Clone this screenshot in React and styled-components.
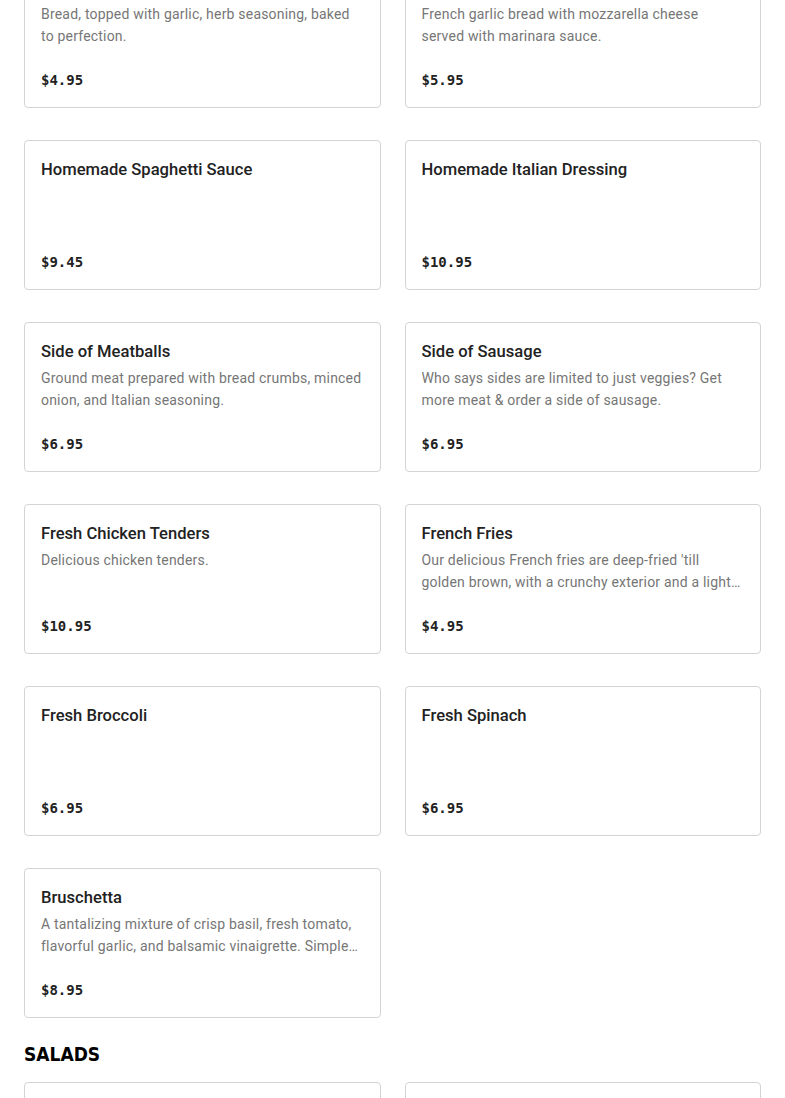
import styled, { createGlobalStyle } from "styled-components";

const GlobalStyle = createGlobalStyle`
  body {
    margin: 0;
    background: #ffffff;
    font-family: Roboto, "Liberation Sans", sans-serif;
    color: #191919;
  }
`;

const Page = styled.main`
  margin-top: -42px;
  padding: 0 24px 40px;
`;

const Section = styled.section`
  display: flex;
  flex-direction: column;
  gap: 16px;
  margin-bottom: 24px;
`;

const SectionTitle = styled.h2`
  margin: 0;
  font-family: "DejaVu Sans Condensed", "DejaVu Sans", sans-serif;
  font-stretch: condensed;
  font-size: 19px;
  font-weight: 700;
  line-height: 24px;
  color: #000;
  text-transform: uppercase;
`;

const Grid = styled.div`
  display: grid;
  grid-template-columns: 1fr 1fr;
  column-gap: 24px;
  row-gap: 32px;
`;

const Card = styled.article`
  box-sizing: border-box;
  height: 150px;
  display: flex;
  flex-direction: column;
  padding: 16px 16px 15px;
  border: 1px solid #d4d4d4;
  border-radius: 4px;
  background: #fff;
`;

const Name = styled.h3`
  box-sizing: border-box;
  margin: 0;
  padding-top: 1px;
  height: 24px;
  font-size: 16.6px;
  font-weight: 500;
  line-height: 24px;
  color: #222;
`;

const Description = styled.p`
  margin: 4px 0 0;
  font-size: 14px;
  line-height: 22px;
  letter-spacing: 0.2px;
  color: #767676;
  display: -webkit-box;
  -webkit-line-clamp: 2;
  -webkit-box-orient: vertical;
  overflow: hidden;
`;

const Price = styled.div`
  margin-top: auto;
  font-family: "DejaVu Sans Mono", "Liberation Mono", monospace;
  font-size: 14px;
  font-weight: 700;
  line-height: 24px;
  color: #222;
`;

const sides = [
  { name: "Garlic Bread", desc: "Bread, topped with garlic, herb seasoning, baked to perfection.", price: "$4.95" },
  { name: "Cheesy Garlic Bread", desc: "French garlic bread with mozzarella cheese served with marinara sauce.", price: "$5.95" },
  { name: "Homemade Spaghetti Sauce", price: "$9.45" },
  { name: "Homemade Italian Dressing", price: "$10.95" },
  { name: "Side of Meatballs", desc: "Ground meat prepared with bread crumbs, minced onion, and Italian seasoning.", price: "$6.95" },
  { name: "Side of Sausage", desc: "Who says sides are limited to just veggies? Get more meat & order a side of sausage.", price: "$6.95" },
  { name: "Fresh Chicken Tenders", desc: "Delicious chicken tenders.", price: "$10.95" },
  { name: "French Fries", desc: "Our delicious French fries are deep-fried 'till golden brown, with a crunchy exterior and a light and fluffy interior.", price: "$4.95" },
  { name: "Fresh Broccoli", price: "$6.95" },
  { name: "Fresh Spinach", price: "$6.95" },
  { name: "Bruschetta", desc: "A tantalizing mixture of crisp basil, fresh tomato, flavorful garlic, and balsamic vinaigrette. Simple and delicious.", price: "$8.95" },
];

const salads = [
  { name: "House Salad", desc: "Crisp lettuce, tomatoes, cucumbers and croutons.", price: "$7.95" },
  { name: "Caesar Salad", desc: "Romaine lettuce, parmesan and croutons with Caesar dressing.", price: "$8.95" },
];

function MenuItem({ item }) {
  return (
    <Card>
      <Name>{item.name}</Name>
      {item.desc && <Description>{item.desc}</Description>}
      <Price>{item.price}</Price>
    </Card>
  );
}

export default function App() {
  return (
    <>
      <GlobalStyle />
      <Page>
        <Section>
          <Grid>
            {sides.map((item) => (
              <MenuItem key={item.name} item={item} />
            ))}
          </Grid>
        </Section>
        <Section>
          <SectionTitle>Salads</SectionTitle>
          <Grid>
            {salads.map((item) => (
              <MenuItem key={item.name} item={item} />
            ))}
          </Grid>
        </Section>
      </Page>
    </>
  );
}
